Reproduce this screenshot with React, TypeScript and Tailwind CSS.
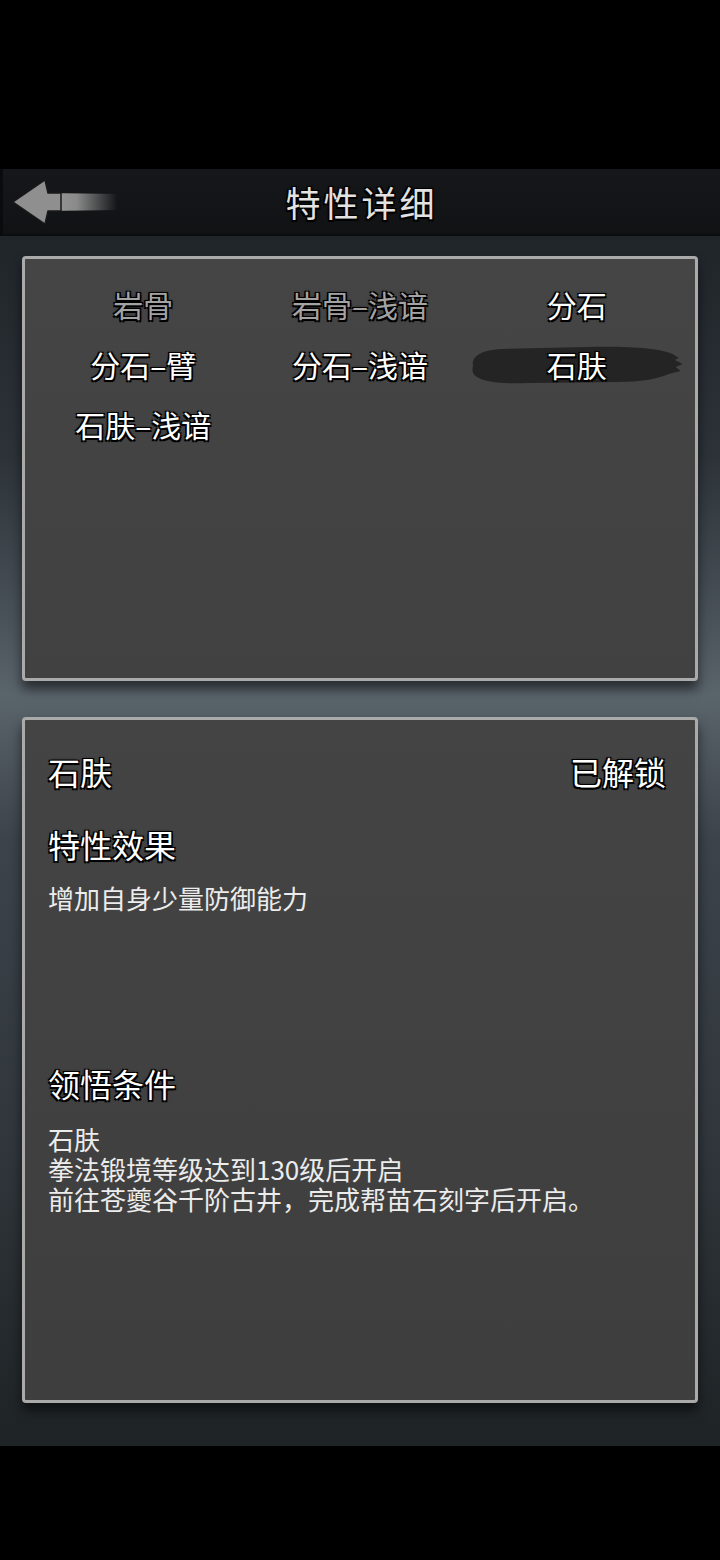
import React from 'react';

const outline =
  '[text-shadow:-1.5px_-1.5px_0_#000,1.5px_-1.5px_0_#000,-1.5px_1.5px_0_#000,1.5px_1.5px_0_#000,0_0_3px_#000]';
const font = "font-['Noto_Sans_CJK_SC','Noto_Sans',sans-serif]";

interface Trait {
  name: string;
  unlocked: boolean;
  selected?: boolean;
}

const traits: Trait[] = [
  { name: '岩骨', unlocked: false },
  { name: '岩骨–浅谙', unlocked: false },
  { name: '分石', unlocked: true },
  { name: '分石–臂', unlocked: true },
  { name: '分石–浅谙', unlocked: true },
  { name: '石肤', unlocked: true, selected: true },
  { name: '石肤–浅谙', unlocked: true },
];

function BackArrow() {
  return (
    <svg width="120" height="50" viewBox="0 0 120 50" className="ml-[8px]">
      <defs>
        <linearGradient id="shaft" x1="0" y1="0" x2="1" y2="0">
          <stop offset="0" stopColor="#9a9a9a" />
          <stop offset="0.4" stopColor="#8a8a8a" />
          <stop offset="0.95" stopColor="#8a8a8a" stopOpacity="0" />
        </linearGradient>
      </defs>
      <path d="M36 16 L110 17 L110 33 L36 34 Z" fill="url(#shaft)" />
      <path
        d="M2 25 L34 3 L37 16 L50 16 L50 34 L37 34 L34 47 Z"
        fill="#8f8f8f"
        stroke="#1a1a1a"
        strokeWidth="1.5"
        strokeLinejoin="round"
      />
    </svg>
  );
}

function Brush() {
  return (
    <svg
      viewBox="0 0 216 42"
      preserveAspectRatio="none"
      className="absolute left-0 top-[10px] h-[42px] w-full"
    >
      <path
        d="M5 22 C3 12 14 6 34 5 L120 3 C160 2 190 4 204 10 L210 14 L206 16 L214 20 L207 23 L212 27 L200 30 C190 35 170 38 150 38 L60 39 C40 40 18 39 9 33 C4 30 4 26 5 22 Z"
        fill="#242424"
      />
    </svg>
  );
}

export default function App() {
  return (
    <div className={`w-[720px] h-[1560px] bg-black flex flex-col ${font}`}>
      <div className="h-[169px] shrink-0" />
      <header className="h-[67px] shrink-0 grid grid-cols-[1fr_auto_1fr] items-center bg-[linear-gradient(180deg,#15171a,#101214)] border-l-[3px] border-l-[#0a0b0c] border-b-2 border-b-[#0b0c0d]">
        <BackArrow />
        <h1 className={`text-[35px] leading-none tracking-[3px] text-[#e2e2e2] ${outline}`}>特性详细</h1>
        <div />
      </header>
      <main className="h-[1210px] shrink-0 px-[22px] pt-[20px] flex flex-col gap-[36px] bg-[linear-gradient(180deg,#20252a_0%,#2c3237_18%,#4a535a_32%,#5a646b_38%,#3c434a_50%,#30363b_75%,#1e2326_100%)]">
        <section className="h-[425px] rounded-[4px] border-[3px] border-[#aaaaaa] bg-[linear-gradient(180deg,#454545,#414141)] shadow-[0_8px_12px_rgba(0,0,0,0.55)] px-[10px] pt-[15px]">
          <div className="grid grid-cols-3">
            {traits.map((t) => (
              <div key={t.name} className="relative h-[60px] flex items-center justify-center">
                {t.selected && <Brush />}
                <span
                  className={`relative text-[30px] leading-none ${outline} ${
                    t.unlocked ? 'text-white' : 'text-[#a3a3a3]'
                  }`}
                >
                  {t.name}
                </span>
              </div>
            ))}
          </div>
        </section>
        <section className="h-[686px] rounded-[4px] border-[3px] border-[#aaaaaa] bg-[linear-gradient(180deg,#444444,#3e3e3e)] shadow-[0_8px_12px_rgba(0,0,0,0.55)] pl-[23px] pr-[29px] pt-[31px] text-white">
          <div className="flex justify-between">
            <span className={`text-[32px] leading-[40px] ${outline}`}>石肤</span>
            <span className={`text-[32px] leading-[40px] ${outline}`}>已解锁</span>
          </div>
          <h2 className={`mt-[33px] text-[32px] leading-[40px] ${outline}`}>特性效果</h2>
          <p className="mt-[19px] text-[26px] leading-[30px] text-[#ececec]">增加自身少量防御能力</p>
          <h2 className={`mt-[150px] text-[32px] leading-[40px] ${outline}`}>领悟条件</h2>
          <div className="mt-[21px] flex flex-col text-[26px] leading-[30px] text-[#ececec]">
            <p className="h-[30px]">石肤</p>
            <p className="h-[30px]">拳法锻境等级达到130级后开启</p>
            <p className="h-[30px]">前往苍夔谷千阶古井，完成帮苗石刻字后开启。</p>
          </div>
        </section>
      </main>
      <div className="flex-1 bg-black" />
    </div>
  );
}
